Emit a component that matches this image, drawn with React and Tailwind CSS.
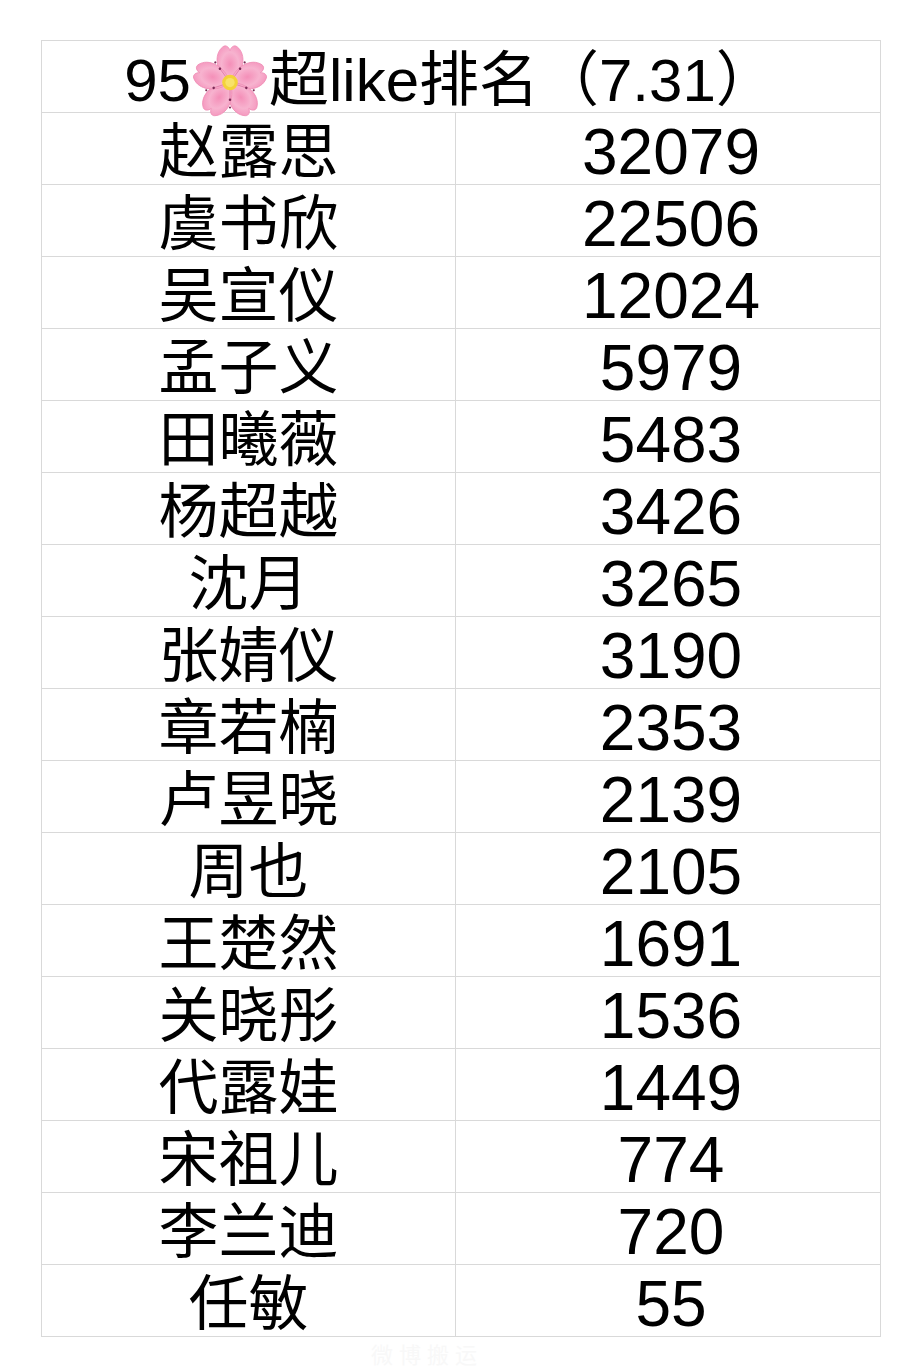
import React from "react";

const rows = [
  ["赵露思", "32079"],
  ["虞书欣", "22506"],
  ["吴宣仪", "12024"],
  ["孟子义", "5979"],
  ["田曦薇", "5483"],
  ["杨超越", "3426"],
  ["沈月", "3265"],
  ["张婧仪", "3190"],
  ["章若楠", "2353"],
  ["卢昱晓", "2139"],
  ["周也", "2105"],
  ["王楚然", "1691"],
  ["关晓彤", "1536"],
  ["代露娃", "1449"],
  ["宋祖儿", "774"],
  ["李兰迪", "720"],
  ["任敏", "55"],
];

const Blossom = () => (
  <svg viewBox="0 0 100 100" className="w-[78px] h-[78px] inline-block align-middle">
    <defs>
      <radialGradient id="pet" cx="50%" cy="50%" r="55%">
        <stop offset="0%" stopColor="#f48fb8" />
        <stop offset="60%" stopColor="#f7b3cf" />
        <stop offset="100%" stopColor="#f59ac0" />
      </radialGradient>
    </defs>
    {[0, 72, 144, 216, 288].map((a) => (
      <path
        key={a}
        transform={`rotate(${a} 50 52)`}
        d="M50 52 C32 40 28 16 41 6 C45 3 49 7 50 11 C51 7 55 3 59 6 C72 16 68 40 50 52 Z"
        fill="url(#pet)"
        stroke="#ef8db5"
        strokeWidth="1"
      />
    ))}
    {[0, 72, 144, 216, 288].map((a) => (
      <g key={"s" + a} transform={`rotate(${a + 36} 50 52)`}>
        <line x1="50" y1="52" x2="50" y2="30" stroke="#e07aa6" strokeWidth="1" />
        <circle cx="50" cy="30" r="1.6" fill="#7a2a55" />
        <circle cx="50" cy="20" r="1.4" fill="#7a2a55" />
      </g>
    ))}
    <circle cx="50" cy="52" r="10" fill="#f3d23a" />
    <circle cx="50" cy="52" r="6" fill="#f8e26a" />
  </svg>
);

export default function App() {
  return (
    <div className="w-[915px] h-[1366px] bg-white pt-[40px] pl-[41px] font-['Liberation_Sans','Noto_Sans_CJK_SC',sans-serif] text-black">
      <div className="w-[840px] border border-[#d9d9d9]">
        <div className="h-[71px] flex items-center justify-center text-[60px] leading-none pr-[22px] pt-[8px]">
          <span>95</span>
          <Blossom />
          <span>超like排名（7.31）</span>
        </div>
        {rows.map(([name, num]) => (
          <div key={name} className="grid grid-cols-[414px_1fr] h-[72px] border-t border-[#d9d9d9]">
            <div className="flex items-center justify-center border-r border-[#d9d9d9] text-[60px] leading-none pt-[8px]">
              {name}
            </div>
            <div className="flex items-center justify-center text-[64px] leading-none pt-[6px] pl-[6px]">
              {num}
            </div>
          </div>
        ))}
      </div>
      <div className="ml-[330px] mt-[2px] text-[22px] text-[#f8f8f8] tracking-[6px]">微博搬运</div>
    </div>
  );
}
